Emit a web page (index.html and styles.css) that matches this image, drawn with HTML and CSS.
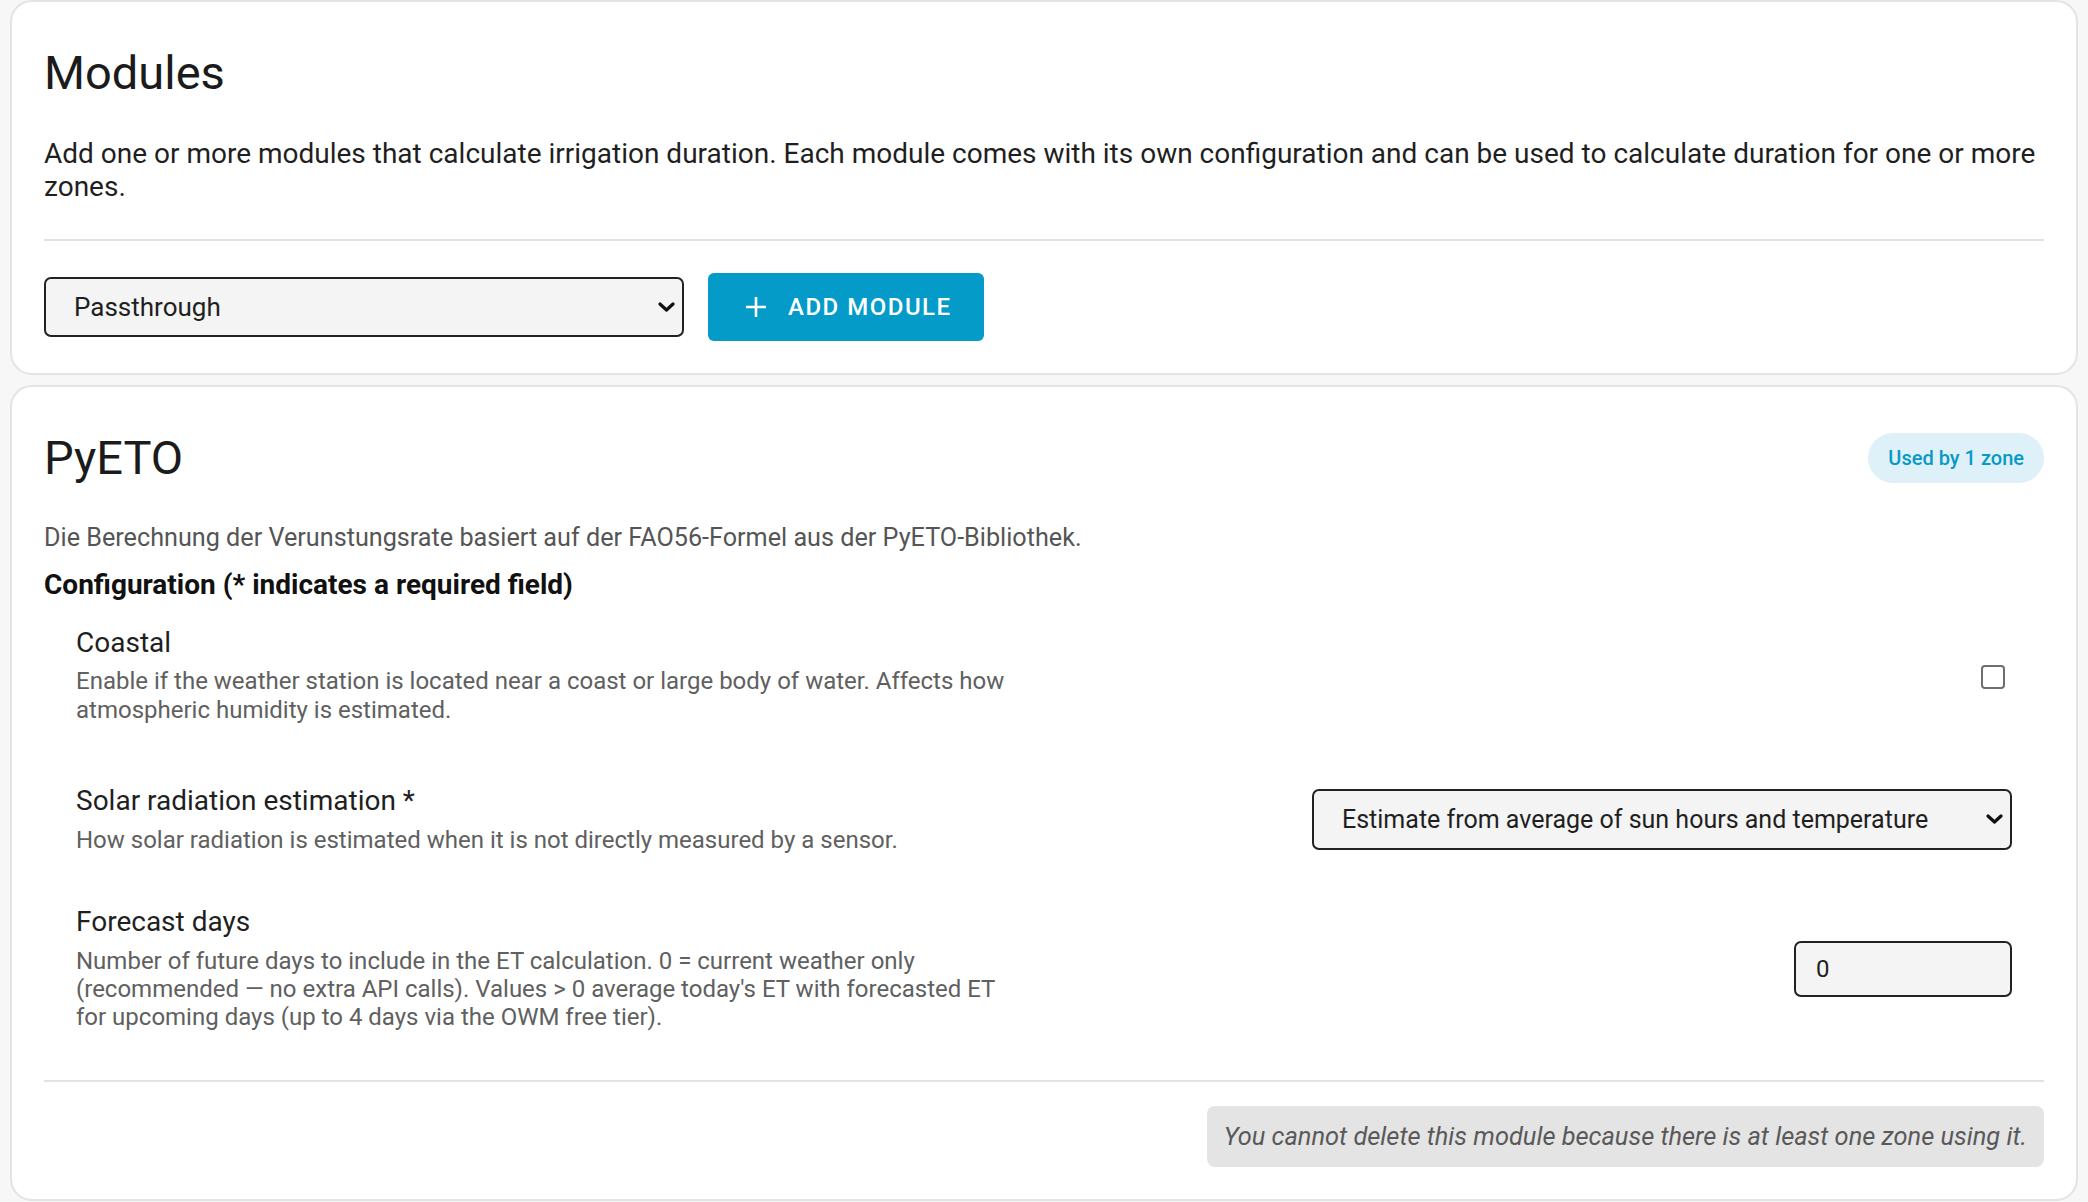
FILE: index.html
```html
<!DOCTYPE html>
<html>
<head>
  <title>Modules</title>
  <link rel="stylesheet" href="styles.css">
</head>
<body>
  <section class="card">
    <div class="card-head">
      <h2 class="card-title">Modules</h2>
    </div>
    <p class="lead">Add one or more modules that calculate irrigation duration. Each module comes with its own configuration and can be used to calculate duration for one or more zones.</p>
    <hr class="rule">
    <div class="add-row">
      <div class="select-wrap select-wrap--module">
        <select>
          <option>Passthrough</option>
          <option>PyETO</option>
          <option>Static</option>
        </select>
        <svg class="chevron" viewBox="0 0 17 10"><path d="M2 2 L8.5 8 L15 2"/></svg>
      </div>
      <button class="btn-add">
        <svg class="plus" viewBox="0 0 24 24"><path d="M12 2 V22 M2 12 H22"/></svg>
        Add module
      </button>
    </div>
  </section>

  <section class="card">
    <div class="card-head">
      <h2 class="card-title">PyETO</h2>
      <span class="badge">Used by 1 zone</span>
    </div>
    <p class="module-desc">Die Berechnung der Verunstungsrate basiert auf der FAO56-Formel aus der PyETO-Bibliothek.</p>
    <h3 class="config-title">Configuration (* indicates a required field)</h3>

    <div class="fields">
      <div class="field">
        <div class="field-info">
          <div class="field-label">Coastal</div>
          <div class="field-help">Enable if the weather station is located near a coast or large body of water. Affects how atmospheric humidity is estimated.</div>
        </div>
        <div class="field-control">
          <input type="checkbox" class="check">
        </div>
      </div>

      <div class="field">
        <div class="field-info">
          <div class="field-label">Solar radiation estimation *</div>
          <div class="field-help">How solar radiation is estimated when it is not directly measured by a sensor.</div>
        </div>
        <div class="field-control">
          <div class="select-wrap select-wrap--solar">
            <select>
              <option>Estimate from average of sun hours and temperature</option>
              <option>Estimate from temperature</option>
              <option>Estimate from sun hours</option>
            </select>
            <svg class="chevron" viewBox="0 0 17 10"><path d="M2 2 L8.5 8 L15 2"/></svg>
          </div>
        </div>
      </div>

      <div class="field">
        <div class="field-info">
          <div class="field-label">Forecast days</div>
          <div class="field-help">Number of future days to include in the ET calculation. 0 = current weather only (recommended — no extra API calls). Values &gt; 0 average today's ET with forecasted ET for upcoming days (up to 4 days via the OWM free tier).</div>
        </div>
        <div class="field-control">
          <input type="number" class="num" value="0" min="0" max="4">
        </div>
      </div>
    </div>

    <hr class="rule rule--foot">
    <div class="card-foot">
      <div class="notice">You cannot delete this module because there is at least one zone using it.</div>
    </div>
  </section>
</body>
</html>
```

FILE: styles.css
```css
/* module settings page */
body {
  margin: 0;
  padding: 0 10px;
  background-color: #f7f7f7;
  font-family: Roboto, "Liberation Sans", sans-serif;
  color: #212121;
}

.card {
  background-color: #fff;
  border: 2px solid #e3e3e3;
  border-radius: 22px;
  padding: 32px;
  margin-bottom: 10px;
}

.card-head {
  display: flex;
  align-items: center;
  justify-content: space-between;
}

.card-title {
  margin: 0;
  font-size: 47px;
  font-weight: 400;
  line-height: 78px;
  color: #1b1b1b;
}

.lead {
  margin: 26px 0 0;
  font-size: 28px;
  line-height: 32.8px;
  color: #1f1f1f;
}

.rule {
  border: 0;
  height: 2px;
  background-color: #e2e2e2;
  margin: 35px 0 32px;
}

.rule--foot {
  margin: 49px 0 24px;
}

/* add module row */
.add-row {
  display: flex;
  align-items: center;
  gap: 24px;
}

.select-wrap {
  position: relative;
}

.select-wrap--module {
  width: 640px;
}

.select-wrap--solar {
  width: 700px;
}

.select-wrap select {
  -webkit-appearance: none;
  appearance: none;
  width: 100%;
  height: 60px;
  padding: 0 52px 0 28px;
  background-color: #f4f4f4;
  border: 2px solid #222;
  border-radius: 7px;
  font-family: inherit;
  font-size: 26px;
  color: #1f1f1f;
}

.select-wrap--solar select {
  height: 61px;
  font-size: 25px;
}

.chevron {
  position: absolute;
  right: 9px;
  top: 50%;
  width: 17px;
  height: 10px;
  margin-top: -5px;
  fill: none;
  stroke: #111;
  stroke-width: 3.2;
  stroke-linecap: round;
  stroke-linejoin: round;
  pointer-events: none;
}

.btn-add {
  display: flex;
  align-items: center;
  gap: 20px;
  height: 68px;
  padding: 0 32px 0 36px;
  background-color: #049bc8;
  color: #fff;
  border: none;
  border-radius: 6px;
  font-family: inherit;
  font-size: 24px;
  font-weight: 500;
  letter-spacing: 1.5px;
  text-transform: uppercase;
  cursor: pointer;
}

.plus {
  width: 24px;
  height: 24px;
  fill: none;
  stroke: #fff;
  stroke-width: 2.6;
}

/* module card */
.badge {
  height: 50px;
  line-height: 50px;
  padding: 0 20px;
  border-radius: 25px;
  background-color: #dff1f8;
  color: #0899c6;
  font-size: 20px;
  font-weight: 500;
}

.module-desc {
  margin: 26px 0 0;
  font-size: 25.2px;
  line-height: 29.3px;
  color: #555;
}

.config-title {
  margin: 17px 0 0;
  font-size: 28px;
  font-weight: 700;
  line-height: 32.8px;
  color: #111;
}

.fields {
  display: flex;
  flex-direction: column;
  gap: 30px;
  margin-top: 16.5px;
}

.field {
  display: flex;
  align-items: center;
  justify-content: space-between;
  min-height: 114px;
  padding: 0 32px;
}

.field-info {
  max-width: 940px;
}

.field-label {
  font-size: 28px;
  line-height: 32.8px;
  color: #1f1f1f;
}

.field-help {
  margin-top: 8px;
  font-size: 24px;
  line-height: 28.1px;
  color: #606060;
}

.check {
  -webkit-appearance: none;
  appearance: none;
  width: 24px;
  height: 24px;
  margin: 7px 7px 0 0;
  border: 2px solid #6e6e6e;
  border-radius: 4px;
  background-color: #fff;
}

.num {
  width: 218px;
  height: 56px;
  box-sizing: border-box;
  padding: 0 20px;
  background-color: #f4f4f4;
  border: 2px solid #222;
  border-radius: 7px;
  font-family: inherit;
  font-size: 24px;
  color: #1f1f1f;
  -moz-appearance: textfield;
}

.num::-webkit-inner-spin-button,
.num::-webkit-outer-spin-button {
  -webkit-appearance: none;
  margin: 0;
}

.card-foot {
  display: flex;
  justify-content: flex-end;
}

.notice {
  padding: 15.5px 17px;
  background-color: #e4e4e4;
  border-radius: 8px;
  font-size: 25.4px;
  font-style: italic;
  line-height: 29.6px;
  color: #595959;
}
```
